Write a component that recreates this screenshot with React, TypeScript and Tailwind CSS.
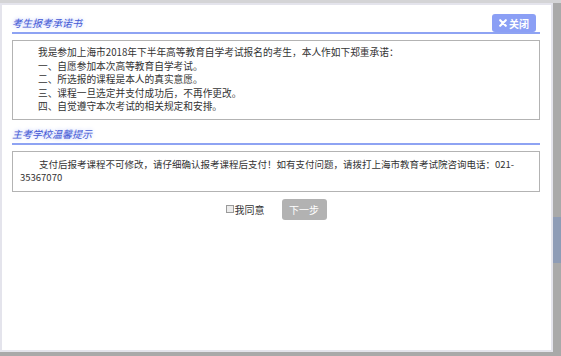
const font = "font-['Microsoft_YaHei','Noto_Sans_CJK_SC',sans-serif]";

const promises = [
  "我是参加上海市2018年下半年高等教育自学考试报名的考生，本人作如下郑重承诺：",
  "一、自愿参加本次高等教育自学考试。",
  "二、所选报的课程是本人的真实意愿。",
  "三、课程一旦选定并支付成功后，不再作更改。",
  "四、自觉遵守本次考试的相关规定和安排。",
];

const SectionTitle = ({ text }: { text: string }) => (
  <span className="block italic text-[10px] leading-[14px] text-[#4459d4] [text-shadow:0_0_4px_#b8c4ff]">
    {text}
  </span>
);

export default function App() {
  return (
    <div className={`w-[561px] h-[356px] bg-[#a9a9a9] overflow-hidden relative ${font}`}>
      <div className="h-[3px] bg-[#d4d4d6]" />
      <div className="absolute right-0 top-[217px] w-[8px] h-[46px] bg-[#8e9cb6]" />
      <div className="w-[553px] h-[349px] border-2 border-[#e4e4ec] bg-white relative px-[10px] pr-[11px]">
        {/* 承诺书 */}
        <div className="flex items-center justify-between pt-[9px] pr-[4px]">
          <SectionTitle text="考生报考承诺书" />
          <button className="h-[18px] w-[44px] rounded-[3px] bg-[#8b9ff5] text-white text-[10px] font-bold flex items-center justify-center gap-[2px]">
            <svg width="8" height="8" viewBox="0 0 10 10">
              <path d="M1.5 1.5 L8.5 8.5 M8.5 1.5 L1.5 8.5" stroke="white" strokeWidth="2.6" strokeLinecap="round" />
            </svg>
            关闭
          </button>
        </div>
        <div className="h-[2px] bg-[#8ea3f3]" />
        <div className="mt-[6px] border border-[#b3b3b3] pl-[25px] pt-[5px] pb-[5px] text-[9.7px] leading-[13.5px] text-[#333]">
          {promises.map((line, i) => (
            <div key={i}>{line}</div>
          ))}
        </div>

        {/* 温馨提示 */}
        <div className="mt-[7px] pb-[2px]">
          <SectionTitle text="主考学校温馨提示" />
        </div>
        <div className="h-[2px] bg-[#8ea3f3]" />
        <div className="mt-[6px] border border-[#b3b3b3] px-[7px] py-[6px] text-[9.5px] leading-[13.5px] text-[#333] indent-[19px]">
          支付后报考课程不可修改，请仔细确认报考课程后支付！如有支付问题，请拨打上海市教育考试院咨询电话：021-35367070
        </div>

        <div className="mt-[7px] flex items-center justify-center gap-[17px]">
          <label className="flex items-center text-[10px] text-[#333]">
            <span className="w-[8px] h-[8px] border border-[#9a9a9a] bg-[#ececec] mr-[1px]" />
            我同意
          </label>
          <button className="h-[21px] w-[45px] rounded-[3px] bg-[#b2b2b2] text-white text-[10px]">
            下一步
          </button>
        </div>
      </div>
    </div>
  );
}
